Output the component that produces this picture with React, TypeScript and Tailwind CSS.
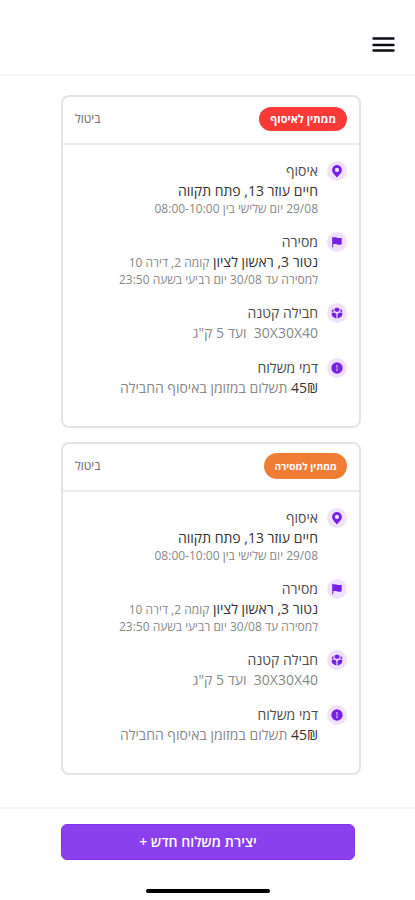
import type { ReactElement, ReactNode } from "react";

interface Shipment {
  id: string;
  status: string;
  statusClass: string;
}

interface DetailRowProps {
  icon: ReactNode;
  title: string;
  children: ReactNode;
}

const shipments: Shipment[] = [
  { id: "pickup", status: "ממתין לאיסוף", statusClass: "h-6 px-[11px] text-[11px] bg-[#f93a36]" },
  { id: "delivery", status: "ממתין למסירה", statusClass: "h-[26px] px-[10px] text-[10px] bg-[#f07d34]" },
];

function PinIcon(): ReactElement {
  return (
    <svg width="12" height="14" viewBox="0 0 12 14" aria-hidden="true">
      <path
        fillRule="evenodd"
        d="M6 1a4.900 4.900 0 0 0-4.900 4.900C1.100 9 4.300 11 6 13.500 7.700 11 10.900 9 10.900 5.900A4.900 4.900 0 0 0 6 1zm0 2.800a2.100 2.100 0 1 1 0 4.200A2.100 2.100 0 0 1 6 3.800z"
      />
    </svg>
  );
}

function FlagIcon(): ReactElement {
  return (
    <svg width="12" height="12" viewBox="0 0 12 12" aria-hidden="true">
      <path d="M1.200 1h1v.6c1.500-.7 2.700-.4 3.900.1 1.300.5 2.800.5 4.600 0v6.600c-1.500.7-3.300.6-4.600.1-1.300-.5-2.500-.6-3.900-.1v3h-1z" />
    </svg>
  );
}

function BoxIcon(): ReactElement {
  return (
    <svg width="12" height="12" viewBox="0 0 12 12" aria-hidden="true">
      <path d="M6 .5 8.800 1.800 8 4.200 6 5.100 4 4.200 3.200 1.800zM2.200 2.200l.8 2.200-2.300.4.200-1.900zM9.800 2.200 9 4.400l2.300.4-.2-1.900zM.6 5.700l2.600-.2 2.200 1.200v4.700l-2-.7L1 8.900zM11.400 5.700l-2.600-.2-2.200 1.200v4.700l2-.7L11 8.900z" />
    </svg>
  );
}

function FeeIcon(): ReactElement {
  return (
    <svg width="12" height="12" viewBox="0 0 12 12" aria-hidden="true">
      <circle cx="6" cy="6" r="5.700" />
      <path d="M6 3v6M5 3.800h1M5 8.500h2" stroke="#c79bff" strokeWidth="1.200" fill="none" />
    </svg>
  );
}

function DetailRow({ icon, title, children }: DetailRowProps): ReactElement {
  return (
    <section className="flex items-start gap-[9px]">
      <span className="flex size-5 shrink-0 items-center justify-center rounded-full bg-[#f0e2ff] fill-[#7620e8]">
        {icon}
      </span>
      <div className="min-w-0 flex-1 whitespace-nowrap text-sm leading-5 text-[#888888]">
        <h2 className="text-[#4c4c4c]">{title}</h2>
        {children}
      </div>
    </section>
  );
}

function ShipmentCard({ shipment }: { shipment: Shipment }): ReactElement {
  return (
    <article className="rounded-lg border-2 border-[#e4e4e4] bg-white">
      <header className="flex h-12 items-center justify-between border-b-2 border-[#ececec] px-3 pb-0.5">
        <span className={`flex items-center rounded-full font-bold text-white ${shipment.statusClass}`}>
          {shipment.status}
        </span>
        <button type="button" className="text-xs text-[#666666]">
          ביטול
        </button>
      </header>
      <div className="flex flex-col gap-[15px] px-3 pt-4 pb-7">
        <DetailRow icon={<PinIcon />} title="איסוף">
          <p className="text-[#333333]">חיים עוזר 13, פתח תקווה</p>
          <p className="text-xs leading-4">29/08 יום שלישי בין 08:00-10:00</p>
        </DetailRow>
        <DetailRow icon={<FlagIcon />} title="מסירה">
          <p className="text-[#333333]">
            נטור 3, ראשון לציון <span className="text-xs text-[#888888]">קומה 2, דירה 10</span>
          </p>
          <p className="text-xs leading-4">למסירה עד 30/08 יום רביעי בשעה 23:50</p>
        </DetailRow>
        <DetailRow icon={<BoxIcon />} title="חבילה קטנה">
          <p>30X30X40&nbsp; ועד 5 ק"ג</p>
        </DetailRow>
        <DetailRow icon={<FeeIcon />} title="דמי משלוח">
          <p>
            <span className="font-medium text-[#333333]">45₪</span> תשלום במזומן באיסוף החבילה
          </p>
        </DetailRow>
      </div>
    </article>
  );
}

export default function App(): ReactElement {
  return (
    <div dir="rtl" lang="he" className="flex min-h-screen flex-col bg-white font-['Open_Sans','Liberation_Sans',sans-serif]">
      <header className="flex h-[76px] items-end border-b-2 border-[#f6f6f6] px-5 pb-[17px]">
        <button type="button" aria-label="תפריט" className="flex">
          <svg width="24" height="24" viewBox="0 0 24 24" fill="none" stroke="#0c0c14" strokeWidth="2.400" strokeLinecap="round">
            <path d="M2.500 5.500h20M2.500 12h20M2.500 17.500h20" />
          </svg>
        </button>
      </header>
      <main className="flex flex-1 flex-col gap-[14px] pt-[19px] pr-[54px] pb-8 pl-[61px]">
        {shipments.map((shipment) => (
          <ShipmentCard key={shipment.id} shipment={shipment} />
        ))}
      </main>
      <footer className="border-t-2 border-[#f8f8f8] pt-[15px] pr-[60px] pb-[7px] pl-[61px]">
        <button
          type="button"
          className="flex h-9 w-full items-center justify-center rounded-md border border-[#8033ea] bg-[#8b40ee] pr-5 text-sm font-semibold text-white"
        >
          יצירת משלוח חדש +
        </button>
        <div className="mx-auto mt-[29px] h-1 w-[124px] rounded-full bg-black" />
      </footer>
    </div>
  );
}
